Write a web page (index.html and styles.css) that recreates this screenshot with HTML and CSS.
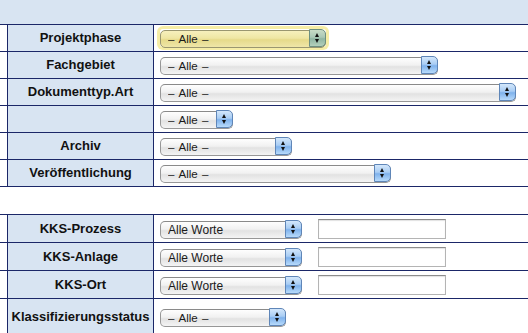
FILE: index.html
```html
<!DOCTYPE html>
<html lang="de">
<head>
    <meta charset="UTF-8">
    <meta name="viewport" content="width=device-width, initial-scale=1.0">
    <title>Suche</title>
    <link rel="stylesheet" href="styles.css">
</head>
<body>
    <div class="band"></div>

    <div class="grid">
        <div class="row">
            <div class="stub"></div>
            <div class="label">Projektphase</div>
            <div class="field">
                <span class="sel focus w-phase">
                    <select><option>&ndash;&nbsp;Alle&nbsp;&ndash;</option></select>
                    <span class="cap"><i class="up"></i><i class="down"></i></span>
                </span>
            </div>
        </div>
        <div class="row">
            <div class="stub"></div>
            <div class="label">Fachgebiet</div>
            <div class="field">
                <span class="sel w-fach">
                    <select><option>&ndash;&nbsp;Alle&nbsp;&ndash;</option></select>
                    <span class="cap"><i class="up"></i><i class="down"></i></span>
                </span>
            </div>
        </div>
        <div class="row">
            <div class="stub"></div>
            <div class="label">Dokumenttyp.Art</div>
            <div class="field">
                <span class="sel w-typ">
                    <select><option>&ndash;&nbsp;Alle&nbsp;&ndash;</option></select>
                    <span class="cap"><i class="up"></i><i class="down"></i></span>
                </span>
            </div>
        </div>
        <div class="row">
            <div class="stub"></div>
            <div class="label"></div>
            <div class="field">
                <span class="sel w-mini">
                    <select><option>&ndash;&nbsp;Alle&nbsp;&ndash;</option></select>
                    <span class="cap"><i class="up"></i><i class="down"></i></span>
                </span>
            </div>
        </div>
        <div class="row">
            <div class="stub"></div>
            <div class="label">Archiv</div>
            <div class="field">
                <span class="sel w-archiv">
                    <select><option>&ndash;&nbsp;Alle&nbsp;&ndash;</option></select>
                    <span class="cap"><i class="up"></i><i class="down"></i></span>
                </span>
            </div>
        </div>
        <div class="row">
            <div class="stub"></div>
            <div class="label">Veröffentlichung</div>
            <div class="field">
                <span class="sel w-veroef">
                    <select><option>&ndash;&nbsp;Alle&nbsp;&ndash;</option></select>
                    <span class="cap"><i class="up"></i><i class="down"></i></span>
                </span>
            </div>
        </div>
    </div>

    <div class="grid second">
        <div class="row tall">
            <div class="stub"></div>
            <div class="label">KKS-Prozess</div>
            <div class="field">
                <span class="sel words w-kks">
                    <select><option>Alle Worte</option></select>
                    <span class="cap"><i class="up"></i><i class="down"></i></span>
                </span>
                <input type="text" class="text">
            </div>
        </div>
        <div class="row tall">
            <div class="stub"></div>
            <div class="label">KKS-Anlage</div>
            <div class="field">
                <span class="sel words w-kks">
                    <select><option>Alle Worte</option></select>
                    <span class="cap"><i class="up"></i><i class="down"></i></span>
                </span>
                <input type="text" class="text">
            </div>
        </div>
        <div class="row tall">
            <div class="stub"></div>
            <div class="label">KKS-Ort</div>
            <div class="field">
                <span class="sel words w-kks">
                    <select><option>Alle Worte</option></select>
                    <span class="cap"><i class="up"></i><i class="down"></i></span>
                </span>
                <input type="text" class="text">
            </div>
        </div>
        <div class="row last">
            <div class="stub"></div>
            <div class="label">Klassifizierungsstatus</div>
            <div class="field">
                <span class="sel w-klass">
                    <select><option>&ndash;&nbsp;Alle&nbsp;&ndash;</option></select>
                    <span class="cap"><i class="up"></i><i class="down"></i></span>
                </span>
            </div>
        </div>
    </div>
</body>
</html>
```

FILE: styles.css
```css
body {
    margin: 0;
    font-family: "Liberation Sans", Arial, sans-serif;
    background: #fff;
    overflow: hidden;
}
.band {
    height: 24px;
    background: #d8e4f2;
}
.grid {
    border-top: 1px solid #1b2768;
}
.grid.second {
    margin-top: 27px;
}
.row {
    display: grid;
    grid-template-columns: 7px 146px 1fr;
    height: 26px;
    border-bottom: 1px solid #1b2768;
}
.row.tall {
    height: 27px;
}
.row.last {
    height: 36px;
}
.label {
    border-left: 1px solid #1b2768;
    background: #d8e4f2;
    color: #111;
    font-size: 13px;
    font-weight: bold;
    display: flex;
    align-items: center;
    justify-content: center;
    white-space: nowrap;
    padding-bottom: 1px;
}
.field {
    border-left: 1px solid #1b2768;
    padding-left: 6px;
    display: flex;
    align-items: center;
    gap: 16px;
}

/* aqua-like select */
.sel {
    position: relative;
    display: inline-block;
    height: 18px;
}
.sel select {
    appearance: none;
    -webkit-appearance: none;
    box-sizing: border-box;
    width: 100%;
    height: 18px;
    margin: 0;
    padding: 0 20px 0 7px;
    border: 1px solid #979797;
    border-top-color: #8a8a8a;
    border-radius: 5px;
    background: linear-gradient(#fefefe 0%, #f1f1f1 45%, #e2e2e2 55%, #f4f4f4 100%);
    font-family: "Liberation Sans", Arial, sans-serif;
    font-size: 11.5px;
    word-spacing: 1px;
    color: #1a1a1a;
    outline: none;
}
.sel.words select {
    font-size: 12px;
    word-spacing: 0;
}
.cap {
    position: absolute;
    top: 0;
    right: 0;
    width: 17px;
    height: 18px;
    box-sizing: border-box;
    border: 1px solid #5f86b8;
    border-radius: 0 5px 5px 0;
    background: linear-gradient(#d3e7fb 0%, #a9cdf4 45%, #7fb2ec 55%, #b7dafb 100%);
}
.cap i {
    position: absolute;
    left: 5px;
    width: 0;
    height: 0;
    border-left: 2.5px solid transparent;
    border-right: 2.5px solid transparent;
}
.cap .up {
    top: 3px;
    border-bottom: 4px solid #111;
}
.cap .down {
    top: 9px;
    border-top: 4px solid #111;
}

.sel.focus {
    box-shadow: 0 0 0 3px #f6eda6;
    border-radius: 3px;
}
.sel.focus select {
    border-color: #9a9670;
    background: linear-gradient(#f7f0bd 0%, #efe6a3 45%, #e6da8a 55%, #efe6a8 100%);
}
.sel.focus .cap {
    border-color: #6d8f80;
    background: linear-gradient(#c8dcc6 0%, #aac8b6 45%, #8fb5a2 55%, #b4d0bc 100%);
}

.w-phase { width: 166px; }
.w-fach { width: 278px; }
.w-typ { width: 356px; }
.w-mini { width: 73px; }
.w-archiv { width: 132px; }
.w-veroef { width: 231px; }
.w-kks { width: 142px; }
.w-klass { width: 126px; }

.text {
    box-sizing: border-box;
    width: 128px;
    height: 20px;
    margin: 0;
    border: 1px solid #b4b4b4;
    border-top-color: #8c8c8c;
    box-shadow: inset 0 1px 1px rgba(0, 0, 0, 0.12);
    background: #fff;
    padding: 2px 3px;
    font-size: 12px;
}
```
